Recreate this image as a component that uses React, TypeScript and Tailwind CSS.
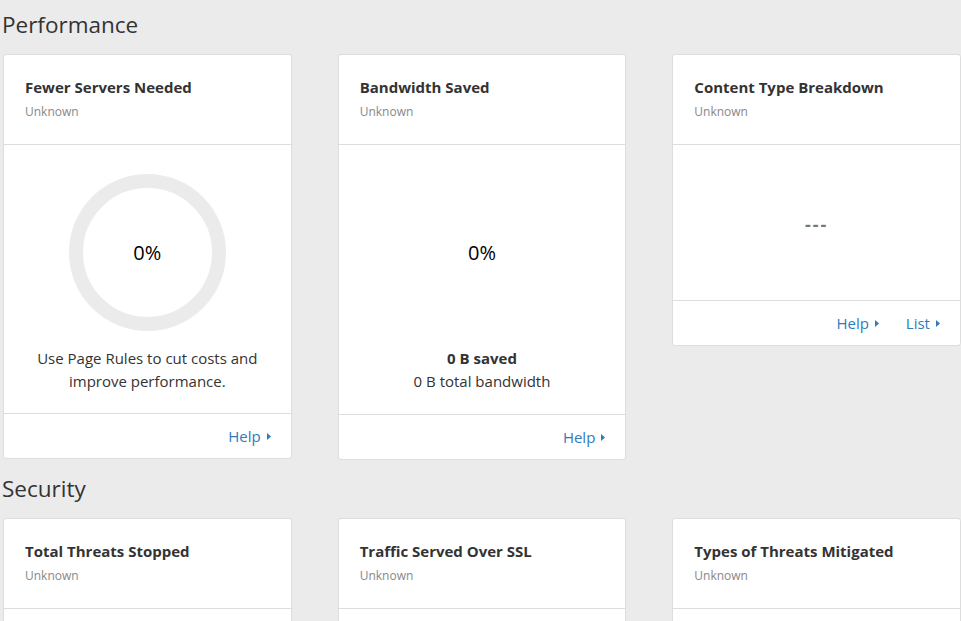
import React from 'react';

const Caret: React.FC = () => (
    <svg width="4" height="7" viewBox="0 0 4 7" className="ml-[6px] inline-block">
        <path d="M0 0 L4 3.5 L0 7 Z" fill="currentColor" />
    </svg>
);

const Card: React.FC<{
    title: string;
    children?: React.ReactNode;
    links?: string[];
    bodyClass?: string;
}> = ({ title, children, links, bodyClass }) => {
    return (
        <div className="bg-white rounded-[3px] border border-[#dddddd] flex flex-col self-start">
            <div className="pt-[21px] pb-[23px] px-[21px] border-b border-[#dddddd]">
                <h3 className="text-[15px] leading-[22px] font-bold text-[#333333]">{title}</h3>
                <p className="mt-[5px] text-[12px] leading-[18px] text-[#888888]">Unknown</p>
            </div>
            {children !== undefined && (
                <div className={`border-b border-[#dddddd] ${bodyClass ?? ''}`}>{children}</div>
            )}
            {links && (
                <div className="h-[44px] flex items-center justify-end gap-[27px] pr-[20px] text-[15px] text-[#2f7bbf]">
                    {links.map((l) => (
                        <span key={l} className="flex items-center">
                            {l}
                            <Caret />
                        </span>
                    ))}
                </div>
            )}
        </div>
    );
};

const App: React.FC = () => {
    return (
        <div
            className="min-h-screen w-[961px] h-[621px] overflow-hidden bg-[#ebebeb] pl-[2px] pt-[9px]"
            style={{ fontFamily: '"Open Sans", sans-serif' }}
        >
            {/* Performance */}
            <h2 className="text-[22.5px] leading-[32px] text-[#333333]">Performance</h2>
            <div className="mt-[13px] ml-[1px] grid grid-cols-3 gap-x-[46px] items-start">
                <Card title="Fewer Servers Needed" links={['Help']}>
                    <div className="h-[268px] flex flex-col items-center pt-[29px]">
                        <div className="w-[157px] h-[157px] rounded-full border-[14px] border-[#ebebeb] flex items-center justify-center">
                            <span className="text-[20px] text-black">0%</span>
                        </div>
                        <p className="mt-[16px] text-center text-[15px] leading-[23px] text-[#333333]">
                            Use Page Rules to cut costs and
                            <br />
                            improve performance.
                        </p>
                    </div>
                </Card>
                <Card title="Bandwidth Saved" links={['Help']}>
                    <div className="h-[269px] flex flex-col items-center pt-[29px]">
                        <div className="w-[157px] h-[157px] flex items-center justify-center">
                            <span className="text-[20px] text-black">0%</span>
                        </div>
                        <p className="mt-[16px] text-center text-[15px] leading-[23px] text-[#333333]">
                            <span className="font-bold">0 B saved</span>
                            <br />
                            0 B total bandwidth
                        </p>
                    </div>
                </Card>
                <Card title="Content Type Breakdown" links={['Help', 'List']}>
                    <div className="h-[155px] flex items-center justify-center pt-[3px]">
                        <span className="text-[18px] font-bold tracking-[2px] text-[#777777]">---</span>
                    </div>
                </Card>
            </div>

            {/* Security */}
            <h2 className="mt-[13px] text-[22.5px] leading-[32px] text-[#333333]">Security</h2>
            <div className="mt-[13px] ml-[1px] grid grid-cols-3 gap-x-[46px] items-start">
                <Card title="Total Threats Stopped">
                    <div className="h-[200px]" />
                </Card>
                <Card title="Traffic Served Over SSL">
                    <div className="h-[200px]" />
                </Card>
                <Card title="Types of Threats Mitigated">
                    <div className="h-[200px]" />
                </Card>
            </div>
        </div>
    );
};

export default App;
